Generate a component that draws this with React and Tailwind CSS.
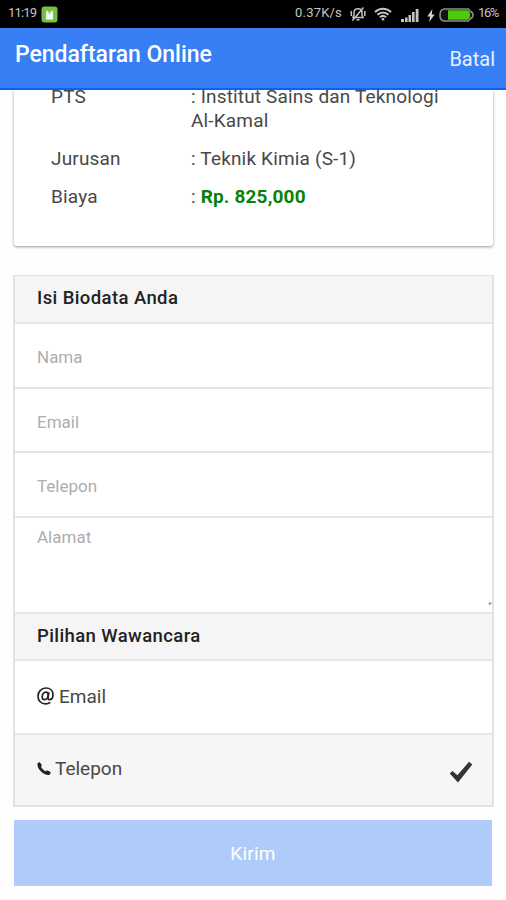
import React from "react";

const details = [
  { label: "PTS", value: "Institut Sains dan Teknologi Al-Kamal" },
  { label: "Jurusan", value: "Teknik Kimia (S-1)" },
  { label: "Biaya", value: "Rp. 825,000", highlight: true },
];

const fields = ["Nama", "Email", "Telepon"];

const StatusBar = () => {
  return (
    <div className="h-[28px] shrink-0 bg-black text-[#c4c4c4] flex items-center justify-between pl-2 pr-2 text-[13px]">
      {/* left side */}
      <div className="flex items-center">
        <span className="w-[27px] -mt-[2px] tracking-[-0.8px] whitespace-nowrap">11:19</span>
        <svg width="17" height="17" viewBox="0 0 17 17" className="ml-[6px]">
          <rect x="0.5" y="0.5" width="16" height="16" rx="3" fill="#76c043" />
          <path d="M5 13.500V7.500l.8-3.500 1.500 2h2.400l1.500-2 .8 3.500v6z" fill="#f4fbef" />
          <path d="M7.600 5.500h1.800v2.500H7.600z" fill="#9bd174" />
        </svg>
      </div>
      {/* right side */}
      <div className="flex items-center">
        <span className="w-[47px] -mt-[2px] tracking-[0.2px] whitespace-nowrap">0.37K/s</span>
        <svg width="18" height="16" viewBox="0 0 18 16" className="ml-[7px]" fill="none" stroke="#c4c4c4" strokeWidth="1.5">
          <path d="M4 11.5 5 9V6.5C5 4 6.7 2.700 9 2.700S13 4 13 6.500V9l1 2.500zM7.500 13.700h3M3.500 14.500 14.500 1.500M2.300 5v5M15.800 5v5" />
        </svg>
        <svg width="18" height="14" viewBox="0 0 18 14" className="ml-[7px]" fill="none" stroke="#c4c4c4" strokeWidth="2">
          <path d="M1 5C5.500.500 12.500.500 17 5M3.500 7.700c3.200-3 7.800-3 11 0M6 10.200c1.800-1.600 4.200-1.600 6 0" />
          <circle cx="9" cy="12.300" r="1.300" fill="#c4c4c4" stroke="none" />
        </svg>
        <svg width="18" height="13" viewBox="0 0 18 13" className="ml-[9px] mt-[2px]" fill="#c4c4c4">
          <path d="M0 10h3v3H0zM4 8.500h2.600V13H4zM7.500 6H10v7H7.500zM11 3h2.600v10H11zM14.700 0h2.800v13h-2.800z" />
        </svg>
        <svg width="8" height="13" viewBox="0 0 8 14" className="ml-[8px] mt-[2px]" fill="#d4d4d4">
          <path d="M5.500 0 0 8h3L2 14l6-8H4.800z" />
        </svg>
        <svg width="35" height="14" viewBox="0 0 35 14" className="ml-[4px] mt-px">
          <path d="M5 1h24.500l2 2.500q2.500.7 2.500 3.500t-2.500 3.500l-2 2.500H5Q1 12.500 1 7T5 1z" fill="#101510" stroke="#8c8c8c" strokeWidth="1.6" />
          <path d="M9 2.300h20l2 2.700v4l-2 2.700H9z" fill="#4cc90a" />
        </svg>
        <span className="w-[20px] ml-[4px] -mt-[2px] tracking-[-1.4px] whitespace-nowrap">16%</span>
      </div>
    </div>
  );
};

const Header = () => {
  return (
    <header className="h-[62px] shrink-0 bg-[#387ef5] border-b-2 border-[#0c63ee] text-white flex justify-between pl-[15px] pr-[11px]">
      <h1 className="pt-[11px] text-[23px] leading-8 font-medium tracking-[-0.03px]">
        Pendaftaran Online
      </h1>
      <button className="h-8 mt-[15px] text-[20px] leading-8 text-[#e9f1ff]">Batal</button>
    </header>
  );
};

const DetailCard = () => {
  return (
    <div className="h-[161px] shrink-0 overflow-hidden px-[11px]">
      <div className="h-[156px] ml-[3px] mr-[2px] rounded-b-[3px] bg-white shadow-[0_1px_3px_rgba(0,0,0,0.4)] pl-[37px] pr-[40px] text-[19px] leading-6 tracking-[0.17px] text-[#484848]">
        <div className="-translate-y-[5px]">
          {details.map((item) => (
            <div key={item.label} className="flex mb-[14px]">
              <span className="w-[140px] shrink-0">{item.label}</span>
              <span>
                :{" "}
                {item.highlight ? (
                  <b className="font-bold text-[#078207]">{item.value}</b>
                ) : (
                  item.value
                )}
              </span>
            </div>
          ))}
        </div>
      </div>
    </div>
  );
};

const Divider = ({ children }) => {
  return (
    <div className="h-full bg-[#f5f5f5] px-[22px] text-[18.5px] leading-[45px] font-medium tracking-[0.4px] text-[#222]">
      {children}
    </div>
  );
};

const App = () => {
  return (
    <div className="w-[506px] h-[900px] overflow-hidden bg-[#fefefe] flex flex-col font-[Roboto,sans-serif]">
      <StatusBar />
      <Header />
      <DetailCard />

      {/* biodata form */}
      <div className="w-[481px] h-[532px] shrink-0 mt-[24px] ml-[13px] border-2 border-t border-[#e2e2e2] bg-white divide-y-2 divide-[#e6e6e6] grid grid-rows-[48px_65px_64px_65px_96px_47px_74px_1fr]">
        <Divider>Isi Biodata Anda</Divider>
        {fields.map((field) => (
          <input
            key={field}
            type="text"
            placeholder={field}
            className="min-w-0 px-[22px] pt-[5px] text-[17px] outline-none placeholder:text-[#adadad]"
          />
        ))}
        <div className="relative">
          <textarea
            placeholder="Alamat"
            className="block w-full h-full px-[22px] pt-[7px] text-[17px] leading-6 resize-none outline-none placeholder:text-[#adadad]"
          />
          <span className="absolute right-px bottom-[7px] w-[2px] h-[3px] bg-[#999] rotate-45" />
        </div>
        <Divider>Pilihan Wawancara</Divider>
        <div className="px-[22px] flex items-center text-[19px] text-[#484848]">
          <svg width="17" height="18" viewBox="0 0 17 18" className="mr-[5px] -mt-[3px]" fill="none" stroke="#222" strokeWidth="1.7">
            <path d="M13.300 15.300C12 16.300 10.400 16.900 8.600 16.900 4.200 16.900 1 13.700 1 9.200 1 4.500 4.400 1 8.900 1c4.200 0 7.100 2.800 7.100 6.700 0 2.900-1.500 4.900-3.500 4.900-1.200 0-1.700-.8-1.500-1.900l.9-5.400" />
            <path d="M11.200 8.300C11 10.900 9.500 12.600 7.600 12.600c-1.500 0-2.400-1-2.400-2.700 0-2.700 1.600-4.700 3.700-4.700 1.500 0 2.500 1.200 2.300 3.100z" />
          </svg>
          <span>Email</span>
        </div>
        <div className="bg-[#f6f6f6] pl-[22px] pr-[19px] flex items-center text-[19px] text-[#484848]">
          <svg width="14" height="14" viewBox="0 0 14 14" className="mr-[4px] -mt-[2px]" fill="#222">
            <path d="M.4 2.500C.4 1.200 1.800 0 2.700.4c.9.400 2.100 2.300 2.100 3.100 0 .8-.8 1-.7 1.500.3 1.200 3 3.700 4.300 4.200.7.200 1-.7 1.900-.7.900 0 2.900 1.100 3.300 1.900.4.900-1.100 2.700-2.500 2.700C6.800 13.100.4 7.200.4 2.500z" />
          </svg>
          <span className="-mt-px">Telepon</span>
          <svg width="24" height="22" viewBox="0 0 24 22" className="ml-auto mt-[3px]" fill="#333">
            <path d="M.8 12.500 3.500 9.900l4.900 4.400L20 .8l3.300 2.700L9 21.500z" />
          </svg>
        </div>
      </div>

      <button className="w-[478px] h-[66px] shrink-0 mt-[13px] ml-[14px] pt-[2px] bg-[#afcbfa] text-white text-[19px] tracking-[0.2px]">
        Kirim
      </button>
    </div>
  );
};

export default App;
